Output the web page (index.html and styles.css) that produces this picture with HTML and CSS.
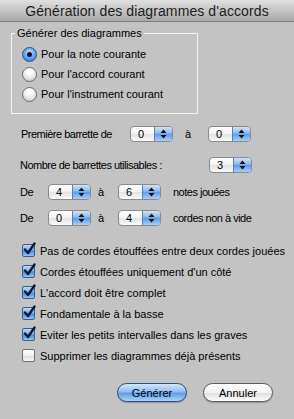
FILE: index.html
```html
<!DOCTYPE html>
<html lang="fr">
<head>
    <meta charset="UTF-8">
    <meta name="viewport" content="width=device-width, initial-scale=1.0">
    <title>Génération des diagrammes d'accords</title>
    <link rel="stylesheet" href="styles.css">
</head>
<body>
    <div class="dialog">
        <div class="titlebar">Génération des diagrammes d'accords</div>

        <fieldset class="group">
            <legend>Générer des diagrammes</legend>
            <label class="radio-row"><span class="radio on"></span>Pour la note courante</label>
            <label class="radio-row"><span class="radio"></span>Pour l'accord courant</label>
            <label class="radio-row"><span class="radio"></span>Pour l'instrument courant</label>
        </fieldset>

        <!-- listes déroulantes -->
        <div class="row row-1">
            <span class="label label-first">Première barrette de</span>
            <span class="select"><span class="val">0</span><span class="arrows"><svg width="7" height="10" viewBox="0 0 7 10"><path d="M3.5 0.5 L6.5 4 L0.5 4 Z M0.5 6 L6.5 6 L3.5 9.5 Z" fill="#111"/></svg></span></span>
            <span class="to to-wide">à</span>
            <span class="select"><span class="val">0</span><span class="arrows"><svg width="7" height="10" viewBox="0 0 7 10"><path d="M3.5 0.5 L6.5 4 L0.5 4 Z M0.5 6 L6.5 6 L3.5 9.5 Z" fill="#111"/></svg></span></span>
        </div>

        <div class="row row-2">
            <span class="label label-long">Nombre de barrettes utilisables :</span>
            <span class="select"><span class="val">3</span><span class="arrows"><svg width="7" height="10" viewBox="0 0 7 10"><path d="M3.5 0.5 L6.5 4 L0.5 4 Z M0.5 6 L6.5 6 L3.5 9.5 Z" fill="#111"/></svg></span></span>
        </div>

        <div class="row row-3">
            <span class="label label-de">De</span>
            <span class="select"><span class="val">4</span><span class="arrows"><svg width="7" height="10" viewBox="0 0 7 10"><path d="M3.5 0.5 L6.5 4 L0.5 4 Z M0.5 6 L6.5 6 L3.5 9.5 Z" fill="#111"/></svg></span></span>
            <span class="to to-narrow">à</span>
            <span class="select"><span class="val">6</span><span class="arrows"><svg width="7" height="10" viewBox="0 0 7 10"><path d="M3.5 0.5 L6.5 4 L0.5 4 Z M0.5 6 L6.5 6 L3.5 9.5 Z" fill="#111"/></svg></span></span>
            <span class="after">notes jouées</span>
        </div>

        <div class="row row-4">
            <span class="label label-de">De</span>
            <span class="select"><span class="val">0</span><span class="arrows"><svg width="7" height="10" viewBox="0 0 7 10"><path d="M3.5 0.5 L6.5 4 L0.5 4 Z M0.5 6 L6.5 6 L3.5 9.5 Z" fill="#111"/></svg></span></span>
            <span class="to to-narrow">à</span>
            <span class="select"><span class="val">4</span><span class="arrows"><svg width="7" height="10" viewBox="0 0 7 10"><path d="M3.5 0.5 L6.5 4 L0.5 4 Z M0.5 6 L6.5 6 L3.5 9.5 Z" fill="#111"/></svg></span></span>
            <span class="after">cordes non à vide</span>
        </div>

        <!-- options -->
        <div class="checks">
            <label class="check-row"><span class="check on"><svg width="15" height="15" viewBox="0 0 15 15"><path d="M3 7.5 L6 11 L12.5 1.5" fill="none" stroke="#0d1a33" stroke-width="2.4" stroke-linecap="round" stroke-linejoin="round"/></svg></span>Pas de cordes étouffées entre deux cordes jouées</label>
            <label class="check-row"><span class="check on"><svg width="15" height="15" viewBox="0 0 15 15"><path d="M3 7.5 L6 11 L12.5 1.5" fill="none" stroke="#0d1a33" stroke-width="2.4" stroke-linecap="round" stroke-linejoin="round"/></svg></span>Cordes étouffées uniquement d'un côté</label>
            <label class="check-row"><span class="check on"><svg width="15" height="15" viewBox="0 0 15 15"><path d="M3 7.5 L6 11 L12.5 1.5" fill="none" stroke="#0d1a33" stroke-width="2.4" stroke-linecap="round" stroke-linejoin="round"/></svg></span>L'accord doit être complet</label>
            <label class="check-row"><span class="check on"><svg width="15" height="15" viewBox="0 0 15 15"><path d="M3 7.5 L6 11 L12.5 1.5" fill="none" stroke="#0d1a33" stroke-width="2.4" stroke-linecap="round" stroke-linejoin="round"/></svg></span>Fondamentale à la basse</label>
            <label class="check-row"><span class="check on"><svg width="15" height="15" viewBox="0 0 15 15"><path d="M3 7.5 L6 11 L12.5 1.5" fill="none" stroke="#0d1a33" stroke-width="2.4" stroke-linecap="round" stroke-linejoin="round"/></svg></span>Eviter les petits intervalles dans les graves</label>
            <label class="check-row"><span class="check"></span>Supprimer les diagrammes déjà présents</label>
        </div>

        <div class="buttons">
            <button class="btn btn-default">Générer</button>
            <button class="btn">Annuler</button>
        </div>
    </div>
</body>
</html>
```

FILE: styles.css
```css
body {
    margin: 0;
    font-family: "Liberation Sans", Arial, sans-serif;
    font-size: 11px;
    color: #000;
    background-color: #c3c3c3;
}

.dialog {
    width: 294px;
    height: 419px;
    background-color: #c3c3c3;
}

.titlebar {
    height: 21px;
    line-height: 23px;
    text-align: center;
    font-size: 14px;
    letter-spacing: 0.1px;
    color: #1c1c1c;
    background: linear-gradient(#e0e0e0, #c4c4c4 50%, #a9a9a9);
    border-bottom: 1px solid #7c7c7c;
}

/* groupe des boutons radio */
.group {
    margin: 5px 0 0 11px;
    padding: 4px 0 9px 3px;
    box-sizing: border-box;
    width: 187px;
    border: 1px solid #f4f4f4;
    border-radius: 0;
}

.group legend {
    padding: 0 2px;
    line-height: 13px;
    font-size: 11px;
}

.radio-row {
    display: flex;
    align-items: center;
    height: 20px;
    padding-left: 7px;
}

.radio {
    width: 13px;
    height: 13px;
    margin-right: 4px;
    border-radius: 50%;
    border: 1px solid #6d6d6d;
    background: radial-gradient(circle at 50% 30%, #ffffff 20%, #e6e6e6 55%, #bdbdbd 100%);
    position: relative;
}

.radio.on {
    border-color: #2d4f85;
    background: radial-gradient(circle at 50% 35%, #cde3fb 0%, #6fa8ec 45%, #2f6fcf 100%);
}

.radio.on::after {
    content: "";
    position: absolute;
    left: 4px;
    top: 4px;
    width: 5px;
    height: 5px;
    border-radius: 50%;
    background-color: #0b1730;
}

/* lignes avec listes */
.row {
    display: flex;
    align-items: center;
    height: 16px;
    padding-left: 20px;
    letter-spacing: -0.5px;
}

.row-1 { margin-top: 12px; }
.row-2 { margin-top: 15px; }
.row-3 { margin-top: 11px; }
.row-4 { margin-top: 10px; }

.label-first { width: 110px; padding-left: 1px; box-sizing: border-box; }
.label-long { width: 189px; }
.label-de { width: 28px; }

.to { box-sizing: border-box; }
.to-wide { width: 35px; padding-left: 12px; }
.to-narrow { width: 27px; padding-left: 7px; }

.after { margin-left: 12px; }

.select {
    display: flex;
    width: 43px;
    height: 16px;
    box-sizing: border-box;
    border: 1px solid #8a8a8a;
    border-radius: 4px;
    overflow: hidden;
    background: linear-gradient(#ffffff, #f2f2f2 50%, #e2e2e2 51%, #fafafa);
    letter-spacing: 0;
}

.select .val {
    flex-grow: 1;
    padding-left: 7px;
    line-height: 14px;
    font-size: 11px;
}

.select .arrows {
    width: 17px;
    display: flex;
    align-items: center;
    justify-content: center;
    border-left: 1px solid #5c7fae;
    background: linear-gradient(#cfe3fa, #89b9f0 45%, #5d9ae6 50%, #a6d0f8);
}

/* cases a cocher */
.checks {
    margin-top: 14px;
}

.check-row {
    display: flex;
    align-items: center;
    height: 21px;
    padding-left: 22px;
}

.check {
    width: 13px;
    height: 13px;
    box-sizing: border-box;
    margin-right: 5px;
    border: 1px solid #707070;
    border-radius: 2px;
    background: linear-gradient(#ffffff, #f0f0f0 50%, #dedede 55%, #f6f6f6);
    position: relative;
}

.check.on {
    border-color: #3b5d8c;
    background: linear-gradient(#bcd8f8, #7fb1ee 45%, #4b8be0 55%, #94c4f7);
}

.check svg {
    position: absolute;
    left: -1px;
    top: -3px;
}

/* boutons */
.buttons {
    display: flex;
    justify-content: flex-end;
    gap: 16px;
    margin-top: 17px;
    padding-right: 21px;
}

.btn {
    width: 70px;
    height: 19px;
    padding: 0;
    font-family: "Liberation Sans", Arial, sans-serif;
    font-size: 11px;
    color: #000;
    border: 1px solid #5e5e5e;
    border-radius: 10px;
    background: linear-gradient(#ffffff, #f3f3f3 50%, #e0e0e0 55%, #fbfbfb);
    box-shadow: 0 1px 1px rgba(0, 0, 0, 0.25);
}

.btn-default {
    border-color: #2f4f80;
    background: linear-gradient(#d2e6fb, #8dbcf1 48%, #5a9ae8 52%, #a9d4fa);
}
```
